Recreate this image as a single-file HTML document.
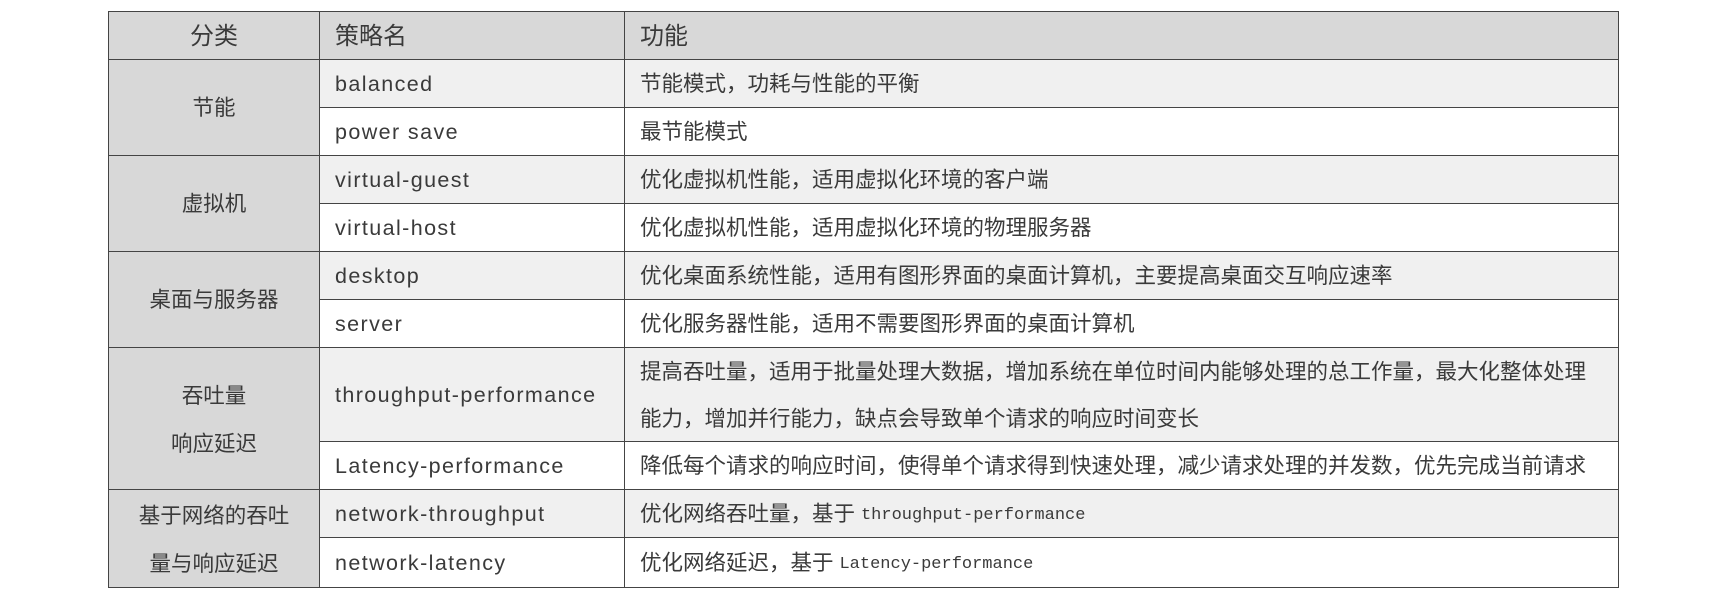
<!DOCTYPE html>
<html><head><meta charset="utf-8"><style>
body{margin:0;width:1710px;height:601px;background:#fff;position:relative;overflow:hidden;font-family:"Liberation Sans","Noto Sans CJK SC",sans-serif;color:#3a3a3a}
.c{position:absolute;box-sizing:border-box;border:1px solid #444;display:flex;align-items:center;font-size:21.5px;line-height:1;margin:-1px 0 0 -1px;white-space:nowrap;padding-top:3px}
.g{background:#d8d8d8}.l{background:#f0f0f0}.w{background:#fff}
.ctr{justify-content:center;text-align:center}
.p{padding-left:15px}
.e{letter-spacing:1.4px;font-size:21.5px}
.h{font-size:24px}
.m{font-family:"Liberation Mono","Noto Sans CJK SC",monospace;font-size:17px;letter-spacing:0}
</style></head><body>
<div class="c g ctr h" style="left:109px;top:12px;width:212px;height:49px">分类</div>
<div class="c g p h" style="left:320px;top:12px;width:306px;height:49px">策略名</div>
<div class="c g p h" style="left:625px;top:12px;width:995px;height:49px">功能</div>

<div class="c g ctr" style="left:109px;top:60px;width:212px;height:97px">节能</div>
<div class="c l p e" style="left:320px;top:60px;width:306px;height:49px">balanced</div>
<div class="c l p" style="left:625px;top:60px;width:995px;height:49px">节能模式，功耗与性能的平衡</div>
<div class="c w p e" style="left:320px;top:108px;width:306px;height:49px">power save</div>
<div class="c w p" style="left:625px;top:108px;width:995px;height:49px">最节能模式</div>

<div class="c g ctr" style="left:109px;top:156px;width:212px;height:97px">虚拟机</div>
<div class="c l p e" style="left:320px;top:156px;width:306px;height:49px">virtual-guest</div>
<div class="c l p" style="left:625px;top:156px;width:995px;height:49px">优化虚拟机性能，适用虚拟化环境的客户端</div>
<div class="c w p e" style="left:320px;top:204px;width:306px;height:49px">virtual-host</div>
<div class="c w p" style="left:625px;top:204px;width:995px;height:49px">优化虚拟机性能，适用虚拟化环境的物理服务器</div>

<div class="c g ctr" style="left:109px;top:252px;width:212px;height:97px">桌面与服务器</div>
<div class="c l p e" style="left:320px;top:252px;width:306px;height:49px">desktop</div>
<div class="c l p" style="left:625px;top:252px;width:995px;height:49px">优化桌面系统性能，适用有图形界面的桌面计算机，主要提高桌面交互响应速率</div>
<div class="c w p e" style="left:320px;top:300px;width:306px;height:49px">server</div>
<div class="c w p" style="left:625px;top:300px;width:995px;height:49px">优化服务器性能，适用不需要图形界面的桌面计算机</div>

<div class="c g ctr" style="left:109px;top:348px;width:212px;height:143px;line-height:48px;white-space:normal">吞吐量<br>响应延迟</div>
<div class="c l p e" style="left:320px;top:348px;width:306px;height:95px">throughput-performance</div>
<div class="c l p" style="left:625px;top:348px;width:995px;height:95px;line-height:47px;white-space:normal">提高吞吐量，适用于批量处理大数据，增加系统在单位时间内能够处理的总工作量，最大化整体处理<br>能力，增加并行能力，缺点会导致单个请求的响应时间变长</div>
<div class="c w p e" style="left:320px;top:442px;width:306px;height:49px">Latency-performance</div>
<div class="c w p" style="left:625px;top:442px;width:995px;height:49px">降低每个请求的响应时间，使得单个请求得到快速处理，减少请求处理的并发数，优先完成当前请求</div>

<div class="c g ctr" style="left:109px;top:490px;width:212px;height:99px;line-height:48px;white-space:normal">基于网络的吞吐<br>量与响应延迟</div>
<div class="c l p e" style="left:320px;top:490px;width:306px;height:49px">network-throughput</div>
<div class="c l p" style="left:625px;top:490px;width:995px;height:49px">优化网络吞吐量，基于&nbsp;<span class="m">throughput-performance</span></div>
<div class="c w p e" style="left:320px;top:538px;width:306px;height:51px">network-latency</div>
<div class="c w p" style="left:625px;top:538px;width:995px;height:51px">优化网络延迟，基于&nbsp;<span class="m">Latency-performance</span></div>
</body></html>
